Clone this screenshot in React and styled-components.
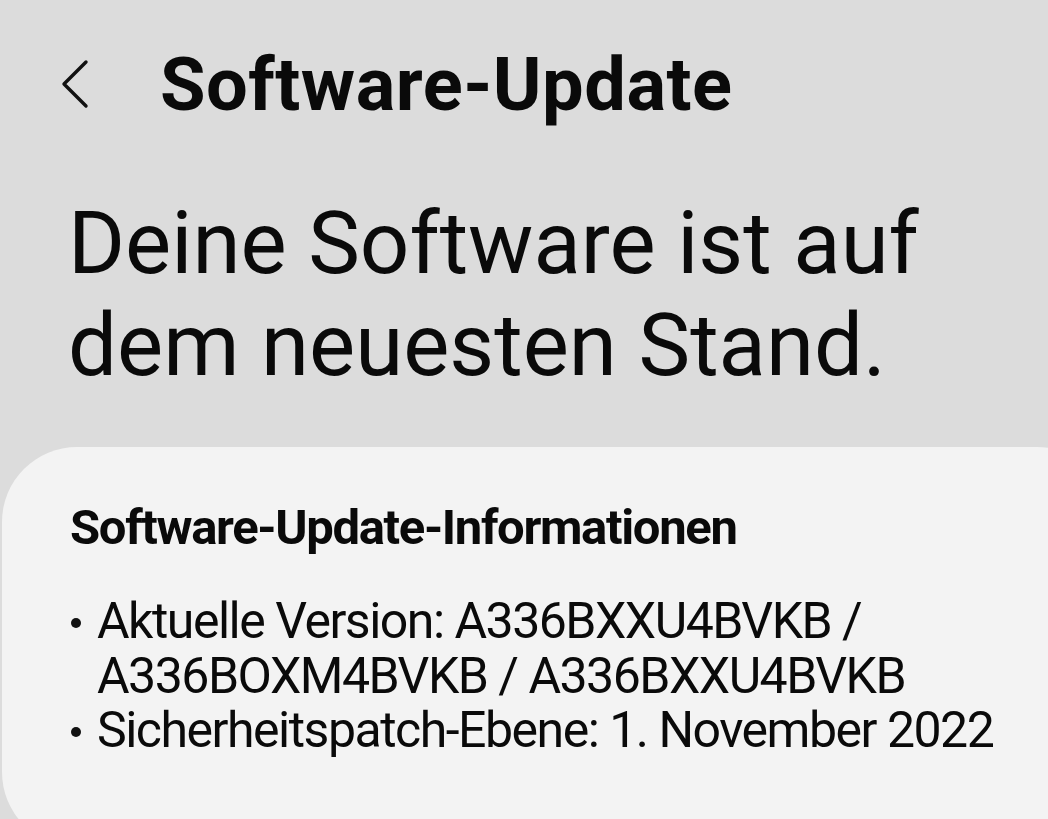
import styled, {createGlobalStyle} from 'styled-components'

const Global = createGlobalStyle`
  html, body {
    margin: 0;
    padding: 0;
    background: #dcdcdc;
  }
  body {
    font-family: Roboto, "Noto Sans", sans-serif;
    color: #0a0a0a;
  }
`

function BackIcon() {
  return (
    <svg width="34" height="52" viewBox="0 0 34 52" fill="none">
      <path d="M28 4 L6 26 L28 48" stroke="#111" strokeWidth="3.4" strokeLinecap="round" strokeLinejoin="round"/>
    </svg>
  )
}

function App() {
  return (
    <Page>
      <Global/>
      <Header>
        <Back aria-label="Zurück"><BackIcon/></Back>
        <Title>Software-Update</Title>
      </Header>
      <Status>Deine Software ist auf dem neuesten Stand.</Status>
      <Card>
        <CardTitle>Software-Update-Informationen</CardTitle>
        <InfoList>
          <Item>Aktuelle Version: A336BXXU4BVKB / A336BOXM4BVKB / A336BXXU4BVKB</Item>
          <Item>Sicherheitspatch-Ebene: 1. November 2022</Item>
        </InfoList>
      </Card>
    </Page>
  )
}

const Page = styled.div`
  width: 1048px;
  height: 819px;
  overflow: hidden;
  background: #dcdcdc;
  display: flex;
  flex-direction: column;
`

const Header = styled.div`
  display: flex;
  align-items: center;
  height: 128px;
  padding: 48px 0 0 58px;
  box-sizing: border-box;
`

const Back = styled.div`
  display: flex;
  width: 34px;
  margin-right: 68px;
  margin-top: -2px;
`

const Title = styled.h2`
  margin: 0;
  font-size: 74px;
  font-weight: 700;
  letter-spacing: 0.5px;
  line-height: 1;
`

const Status = styled.h1`
  margin: 70px 0 0 68px;
  width: 900px;
  font-size: 87px;
  font-weight: 400;
  line-height: 102px;
  letter-spacing: 0;
`

const Card = styled.section`
  margin: 51px 0 0 2px;
  width: 1110px;
  height: 400px;
  flex-shrink: 0;
  background: #f3f3f3;
  border-radius: 75px;
  padding: 51px 0 0 68px;
  box-sizing: border-box;
`

const CardTitle = styled.h3`
  margin: 0;
  font-size: 49px;
  font-weight: 700;
  line-height: 60px;
  letter-spacing: -1.35px;
`

const InfoList = styled.ul`
  margin: 36px 0 0 0;
  padding: 0;
  list-style: none;
  width: 950px;
`

const Item = styled.li`
  position: relative;
  padding-left: 27px;
  font-size: 50px;
  line-height: 54.5px;
  letter-spacing: -1.5px;

  &::before {
    content: '';
    position: absolute;
    left: 1px;
    top: 24px;
    width: 10px;
    height: 10px;
    border-radius: 50%;
    background: #111;
  }
`

export default App
